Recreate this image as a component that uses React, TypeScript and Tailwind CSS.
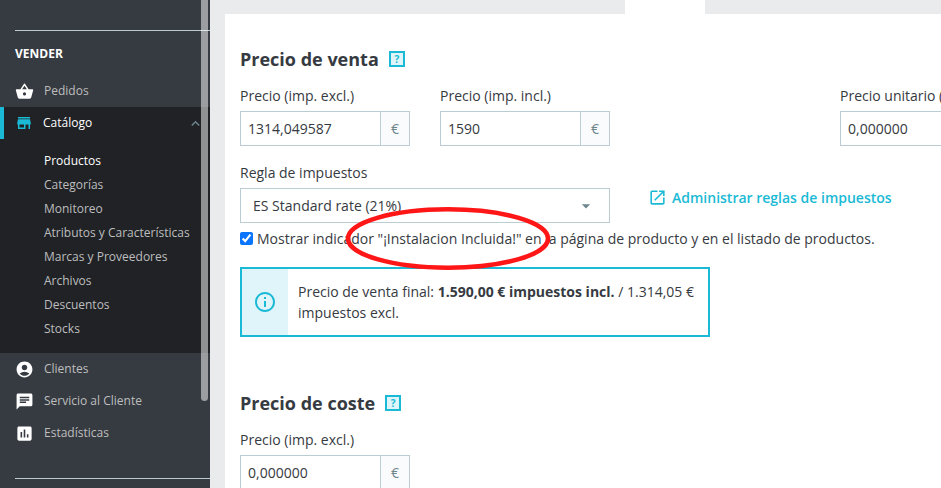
import { useState, type ReactNode } from "react";
import {
  MdAccountCircle,
  MdArrowDropDown,
  MdAssessment,
  MdChat,
  MdInfoOutline,
  MdKeyboardArrowUp,
  MdOpenInNew,
  MdShoppingBasket,
  MdStore,
} from "react-icons/md";

const catalogLinks = [
  "Productos",
  "Categorías",
  "Monitoreo",
  "Atributos y Características",
  "Marcas y Proveedores",
  "Archivos",
  "Descuentos",
  "Stocks",
];

function MenuItem({ icon, children }: { icon: ReactNode; children: ReactNode }) {
  return (
    <a href="#" className="flex h-8 items-center gap-2.5 pl-[15px] text-[#bebebe]">
      <span className="text-[19px] text-white">{icon}</span>
      {children}
    </a>
  );
}

function Sidebar() {
  return (
    <nav className="relative h-screen w-[210px] shrink-0 overflow-hidden bg-[#363a41] text-[12px] leading-6">
      <div className="ml-[15px] mt-[30px] border-t border-[#bbcdd2]" />
      <h2 className="mt-[11px] pl-[15px] font-bold text-white">VENDER</h2>
      <div className="mt-[9px]">
        <MenuItem icon={<MdShoppingBasket />}>Pedidos</MenuItem>
      </div>

      <div className="bg-[#202226] pb-3">
        <a href="#" className="flex h-8 items-center border-l-4 border-[#1abad6] pl-[11px] pr-1.5 font-medium text-white">
          <MdStore className="text-[18px] text-[#1abad6]" />
          <span className="ml-2.5 grow">Catálogo</span>
          <MdKeyboardArrowUp className="text-[17px] text-[#6c868e]" />
        </a>
        <ul className="pl-11 pt-2.5">
          {catalogLinks.map((label, i) => (
            <li key={label}>
              <a href="#" className={i === 0 ? "font-medium text-white" : "text-[#bebebe]"}>
                {label}
              </a>
            </li>
          ))}
        </ul>
      </div>

      <MenuItem icon={<MdAccountCircle />}>Clientes</MenuItem>
      <MenuItem icon={<MdChat />}>Servicio al Cliente</MenuItem>
      <MenuItem icon={<MdAssessment />}>Estadísticas</MenuItem>
      <div className="ml-[15px] mt-[29px] border-t border-[#bbcdd2]" />

      {/* scroll thumb */}
      <div className="absolute right-0.5 top-0 h-[401px] w-[7px] rounded-b bg-white/50" />
    </nav>
  );
}

function Heading({ children }: { children: ReactNode }) {
  return (
    <div className="flex h-6 items-center gap-2.5">
      <h2 className="text-[18px] font-bold leading-6">{children}</h2>
      <button className="flex size-4 items-center justify-center border-2 border-[#1abad6] bg-[#dff5f9] text-[10px] font-bold text-[#1abad6]">
        ?
      </button>
    </div>
  );
}

function PriceField({ id, label, initial }: { id: string; label: string; initial: string }) {
  const [value, setValue] = useState(initial);

  return (
    <div>
      <label htmlFor={id} className="block whitespace-nowrap">{label}</label>
      <div className="mt-[5px] flex h-[35px] border border-[#bbcdd2]">
        <input
          id={id}
          className="w-0 grow bg-white px-[7px] outline-none"
          value={value}
          onChange={(e) => setValue(e.target.value)}
        />
        <span className="flex w-[29px] items-center justify-center border-l border-[#bbcdd2] bg-[#fafbfc] text-[#6c868e]">€</span>
      </div>
    </div>
  );
}

export default function App() {
  const [showBadge, setShowBadge] = useState(true);

  return (
    <div className="flex h-screen overflow-hidden bg-[#eaebec] font-['Open_Sans','Noto_Sans',sans-serif] text-[14px] leading-[21px] text-[#363a41]">
      <Sidebar />

      <main className="flex min-w-0 grow flex-col overflow-hidden pl-[15px]">
        <div className="ml-[400px] h-3.5 w-20 shrink-0 bg-white" />
        <div className="grow bg-white px-[15px] pt-[33px]">
          <Heading>Precio de venta</Heading>
          <div className="mt-3.5 grid grid-cols-[repeat(4,170px)] gap-x-[30px]">
            <PriceField id="price-excl" label="Precio (imp. excl.)" initial="1314,049587" />
            <PriceField id="price-incl" label="Precio (imp. incl.)" initial="1590" />
            <div />
            <PriceField id="unit-price" label="Precio unitario (imp. excl.)" initial="0,000000" />
          </div>

          <div className="mt-4 flex items-end gap-[38px]">
            <div className="w-[370px]">
              <label htmlFor="tax-rule" className="block">Regla de impuestos</label>
              <div className="relative mt-[5px]">
                <select id="tax-rule" className="block h-[35px] w-full appearance-none border border-[#bbcdd2] bg-white px-3 outline-none">
                  <option>ES Standard rate (21%)</option>
                </select>
                <MdArrowDropDown className="pointer-events-none absolute right-3.5 top-2 text-[20px] text-[#6c868e]" />
              </div>
            </div>
            <a href="#" className="flex h-[52px] items-center gap-[5px] font-semibold text-[#1abad6]">
              <MdOpenInNew className="text-[19px]" />
              Administrar reglas de impuestos
            </a>
          </div>

          <div className="relative mt-[5px]">
            <label className="flex items-center gap-1 whitespace-nowrap">
              <input
                type="checkbox"
                className="size-[13px] accent-[#0b75ff]"
                checked={showBadge}
                onChange={(e) => setShowBadge(e.target.checked)}
              />
              Mostrar indicador "¡Instalacion Incluida!" en la página de producto y en el listado de productos.
            </label>
            <svg className="pointer-events-none absolute -top-[22px] left-[104px] z-10" width="208" height="66" fill="none">
              <ellipse cx="104" cy="32.5" rx="100" ry="29.2" stroke="#ff1717" strokeWidth="4.6" />
            </svg>
          </div>

          <div className="mt-[18px] flex w-[470px] border-2 border-[#1abad6]">
            <div className="flex w-[46px] shrink-0 items-center justify-center bg-[#dff5f9]">
              <MdInfoOutline className="text-[24px] text-[#1abad6]" />
            </div>
            <p className="px-2.5 py-3">
              Precio de venta final: <strong>1.590,00 € impuestos incl.</strong> / 1.314,05 € impuestos excl.
            </p>
          </div>

          <div className="mt-[54px]">
            <Heading>Precio de coste</Heading>
          </div>
          <div className="mt-3.5 w-[170px]">
            <PriceField id="cost-price" label="Precio (imp. excl.)" initial="0,000000" />
          </div>
        </div>
      </main>
    </div>
  );
}
